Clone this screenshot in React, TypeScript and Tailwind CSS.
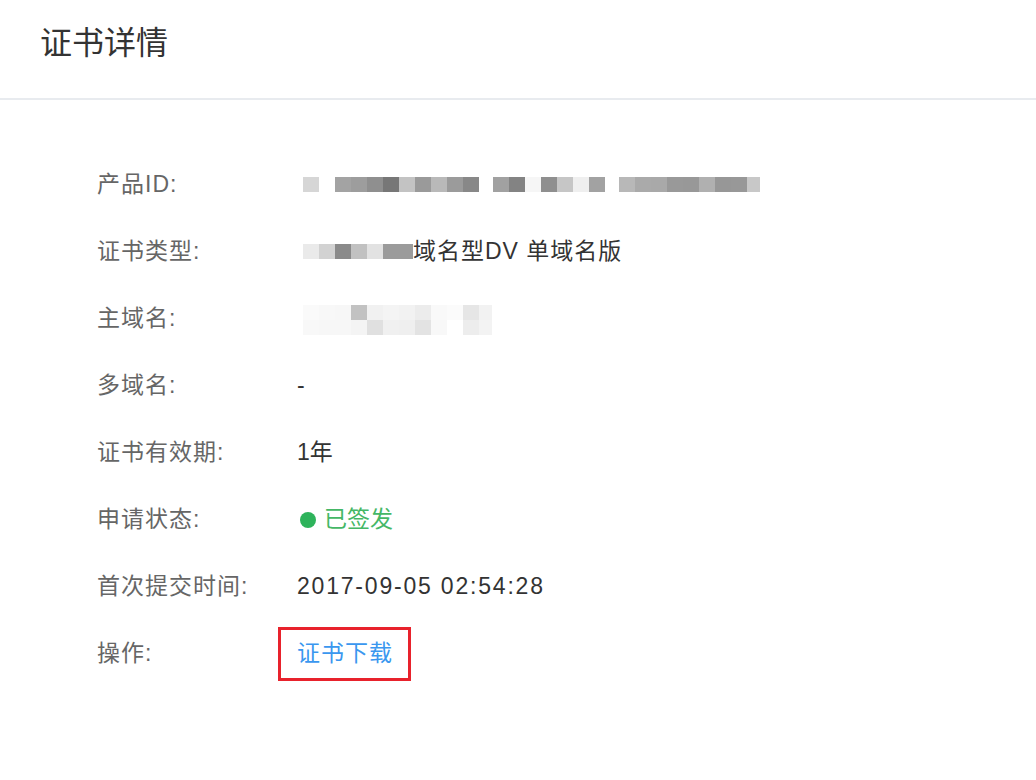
import React from "react";

const font = { fontFamily: '"Liberation Sans", "Noto Sans CJK SC", sans-serif' };

type Cell = [number, string];

const Mosaic: React.FC<{ rows: Cell[][] }> = ({ rows }) => (
  <div className="flex flex-col">
    {rows.map((row, i) => (
      <div key={i} className="flex">
        {row.map(([w, c], j) => (
          <div key={j} className="h-[15px]" style={{ width: w, backgroundColor: c }} />
        ))}
      </div>
    ))}
  </div>
);

const idRow: Cell[] = [
  [16, "#d6d6d6"], [16, "transparent"], [16, "#a3a3a3"], [16, "#9d9d9d"], [16, "#8f8f8f"], [16, "#777777"],
  [16, "#c3c3c3"], [16, "#9a9a9a"], [16, "#b9b9b9"], [16, "#9b9b9b"], [16, "#888888"], [14, "transparent"],
  [16, "#a1a1a1"], [16, "#838383"], [16, "#f6f6f6"], [16, "#8f8f8f"], [16, "#c6c6c6"], [16, "#efefef"],
  [16, "#a2a2a2"], [14, "transparent"], [16, "#b8b8b8"], [16, "#aaaaaa"], [16, "#a9a9a9"], [16, "#999999"],
  [16, "#989898"], [16, "#b0b0b0"], [16, "#979797"], [16, "#989898"], [13, "#c8c8c8"],
];

const typeRow: Cell[] = [
  [16, "#eaeaea"], [16, "#d2d2d2"], [16, "#8a8a8a"], [16, "#c1c1c1"], [16, "#e2e2e2"], [30, "#9b9b9b"],
];

const domainRows: Cell[][] = [
  [[16, "#fafafa"], [16, "#f8f8f8"], [16, "#f7f7f7"], [16, "#c2c2c2"], [16, "#f1f1f1"], [16, "#f4f4f4"], [16, "#f2f2f2"], [16, "#ececec"], [16, "#f9f9f9"], [16, "#fbfbfb"], [16, "#e6e6e6"], [13, "#f2f2f2"]],
  [[16, "#f8f8f8"], [16, "#f7f7f7"], [16, "#f7f7f7"], [16, "#f4f4f4"], [16, "#e0e0e0"], [16, "#f0f0f0"], [16, "#efefef"], [16, "#e3e3e3"], [16, "#f8f8f8"], [16, "#ffffff"], [16, "#ededed"], [13, "#f3f3f3"]],
];

const Row: React.FC<{ label: string; children: React.ReactNode }> = ({ label, children }) => (
  <div className="flex h-[67px] items-center">
    <div className="w-[200px] shrink-0 text-[23px] tracking-[1px] text-[#666666]">{label}</div>
    <div className="flex items-center text-[23px] text-[#333333]">{children}</div>
  </div>
);

export default function App() {
  return (
    <div className="min-h-[780px] w-[1036px] bg-white" style={font}>
      <div className="flex h-[100px] items-start border-b-2 border-[#e8ebef] pl-[40px] pt-[21px]">
        <h1 className="text-[32px] leading-[44px] text-[#333333]">证书详情</h1>
      </div>
      <div className="pl-[97px] pt-[51px]">
        <Row label="产品ID:">
          <div className="pl-[6px]">
            <Mosaic rows={[idRow]} />
          </div>
        </Row>
        <Row label="证书类型:">
          <div className="pl-[6px]">
            <Mosaic rows={[typeRow]} />
          </div>
          <span className="tracking-[1px]">域名型DV 单域名版</span>
        </Row>
        <Row label="主域名:">
          <div className="pl-[6px] pt-[2px]">
            <Mosaic rows={domainRows} />
          </div>
        </Row>
        <Row label="多域名:">
          <span>-</span>
        </Row>
        <Row label="证书有效期:">
          <span>1年</span>
        </Row>
        <Row label="申请状态:">
          <span className="mr-[8px] ml-[3px] h-[16px] w-[16px] rounded-full bg-[#2eb35b]" />
          <span className="text-[#45b766]">已签发</span>
        </Row>
        <Row label="首次提交时间:">
          <span className="tracking-[1.8px]">2017-09-05 02:54:28</span>
        </Row>
        <Row label="操作:">
          <div className="-ml-[19px] flex h-[54px] items-center border-[3px] border-[#e8222c] pr-[15px] pl-[16px]">
            <span className="cursor-pointer tracking-[1px] text-[#3a97ef]">证书下载</span>
          </div>
        </Row>
      </div>
    </div>
  );
}
